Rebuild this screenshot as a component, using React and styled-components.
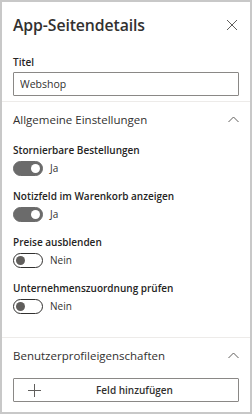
import React from 'react';
import styled, { createGlobalStyle } from 'styled-components';

const GlobalStyle = createGlobalStyle`
  html, body {
    margin: 0;
    padding: 0;
    background: #ffffff;
  }
  body {
    font-family: 'Open Sans', 'Noto Sans', sans-serif;
    color: #323130;
  }
`;

const Panel = styled.div`
  box-sizing: border-box;
  width: 252px;
  height: 414px;
  border: 2px solid #c8c8c8;
  display: flex;
  flex-direction: column;
  background: #fff;
  overflow: hidden;
`;

const Header = styled.div`
  display: flex;
  align-items: center;
  justify-content: space-between;
  padding: 10px 11px 0 11px;
  height: 26px;
`;

const Title = styled.h1`
  margin: 0;
  font-size: 15.8px;
  font-weight: 600;
  color: #323130;
  letter-spacing: -0.1px;
`;

const IconButton = styled.button`
  border: none;
  background: none;
  padding: 0;
  width: 14px;
  height: 14px;
  display: flex;
  align-items: center;
  justify-content: center;
  color: #605e5c;
  cursor: pointer;
`;

const Block = styled.div`
  padding: 0 11px;
`;

const Label = styled.div`
  font-size: 10px;
  font-weight: 600;
  color: #252423;
  line-height: 14px;
  margin-top: ${(p) => p.$top || 0}px;
`;

const Input = styled.input`
  box-sizing: border-box;
  width: 100%;
  height: 24px;
  margin-top: 3px;
  border: 1px solid #8a8886;
  border-radius: 1px;
  padding: 0 6px;
  font-family: inherit;
  font-size: 10.5px;
  color: #323130;
  outline: none;
`;

const Divider = styled.div`
  height: 1px;
  background: #edebe9;
  margin-top: ${(p) => p.$top || 0}px;
`;

const SectionHead = styled.div`
  display: flex;
  align-items: center;
  justify-content: space-between;
  height: 34px;
  padding: 0 11px;
  font-size: 11.5px;
  color: #323130;
`;

const ToggleRow = styled.div`
  display: flex;
  align-items: center;
  gap: 7px;
  margin-top: 3px;
  height: 16px;
  font-size: 10px;
  color: #323130;
`;

const Track = styled.span`
  box-sizing: border-box;
  width: 30px;
  height: 15px;
  border-radius: 8px;
  display: flex;
  align-items: center;
  padding: 0 2px;
  justify-content: ${(p) => (p.$on ? 'flex-end' : 'flex-start')};
  background: ${(p) => (p.$on ? '#6b6b6b' : '#fff')};
  border: 1px solid ${(p) => (p.$on ? '#6b6b6b' : '#323130')};
`;

const Thumb = styled.span`
  width: 9px;
  height: 9px;
  border-radius: 50%;
  background: ${(p) => (p.$on ? '#fff' : '#605e5c')};
`;

const AddButton = styled.button`
  box-sizing: border-box;
  width: 100%;
  height: 24px;
  margin-top: 6px;
  border: 1px solid #8a8886;
  border-radius: 1px;
  background: #fff;
  display: flex;
  align-items: center;
  padding: 0 0 0 14px;
  font-family: inherit;
  font-size: 10px;
  font-weight: 600;
  color: #323130;
  cursor: pointer;
`;

const ButtonText = styled.span`
  flex: 1;
  text-align: center;
  padding-right: 10px;
`;

const Close = () => (
  <svg width="12" height="12" viewBox="0 0 12 12" fill="none" stroke="#605e5c" strokeWidth="1">
    <path d="M1 1 L11 11 M11 1 L1 11" />
  </svg>
);

const Chevron = () => (
  <svg width="11" height="7" viewBox="0 0 11 7" fill="none" stroke="#605e5c" strokeWidth="1">
    <path d="M0.5 6 L5.5 1 L10.5 6" />
  </svg>
);

const Plus = () => (
  <svg width="13" height="13" viewBox="0 0 13 13" fill="none" stroke="#605e5c" strokeWidth="1">
    <path d="M6.5 0 V13 M0 6.5 H13" />
  </svg>
);

const Toggle = ({ label, on, top }) => (
  <>
    <Label $top={top}>{label}</Label>
    <ToggleRow>
      <Track $on={on}>
        <Thumb $on={on} />
      </Track>
      <span>{on ? 'Ja' : 'Nein'}</span>
    </ToggleRow>
  </>
);

const settings = [
  { label: 'Stornierbare Bestellungen', on: true },
  { label: 'Notizfeld im Warenkorb anzeigen', on: true },
  { label: 'Preise ausblenden', on: false },
  { label: 'Unternehmenszuordnung prüfen', on: false },
];

export default function App() {
  return (
    <>
      <GlobalStyle />
      <Panel>
        <Header>
          <Title>App-Seitendetails</Title>
          <IconButton aria-label="Schließen">
            <Close />
          </IconButton>
        </Header>
        <Block>
          <Label $top={17}>Titel</Label>
          <Input defaultValue="Webshop" />
        </Block>
        <Divider $top={5} />
        <SectionHead>
          <span>Allgemeine Einstellungen</span>
          <Chevron />
        </SectionHead>
        <Block>
          {settings.map((s, i) => (
            <Toggle key={s.label} label={s.label} on={s.on} top={i === 0 ? 7 : 13} />
          ))}
        </Block>
        <Divider $top={23} />
        <SectionHead>
          <span>Benutzerprofileigenschaften</span>
          <Chevron />
        </SectionHead>
        <Block>
          <AddButton>
            <Plus />
            <ButtonText>Feld hinzufügen</ButtonText>
          </AddButton>
        </Block>
      </Panel>
    </>
  );
}
